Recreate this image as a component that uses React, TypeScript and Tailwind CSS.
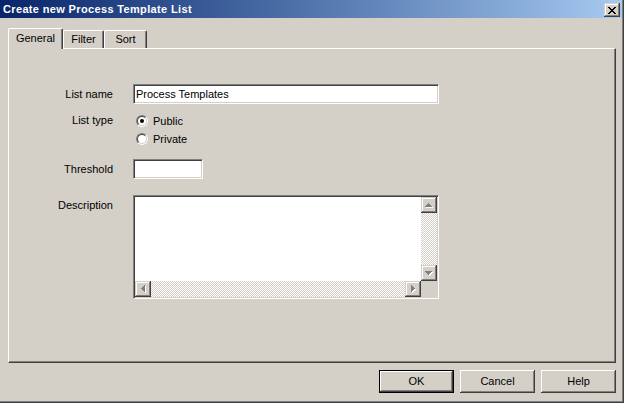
import React from "react";

const FONT = { fontFamily: '"Liberation Sans", Arial, sans-serif' };

function Arrow({ dir }: { dir: "up" | "down" | "left" | "right" }) {
  // rows of a small triangle, drawn as pixel rects
  const rects: { x: number; y: number; w: number; h: number }[] = [];
  if (dir === "up") {
    for (let i = 0; i < 4; i++) rects.push({ x: 7 - i, y: 6 + i, w: 1 + 2 * i, h: 1 });
  } else if (dir === "down") {
    for (let i = 0; i < 4; i++) rects.push({ x: 4 + i, y: 6 + i, w: 7 - 2 * i, h: 1 });
  } else if (dir === "left") {
    for (let i = 0; i < 4; i++) rects.push({ x: 6 + i, y: 7 - i, w: 1, h: 1 + 2 * i });
  } else {
    for (let i = 0; i < 4; i++) rects.push({ x: 6 + i, y: 4 + i, w: 1, h: 7 - 2 * i });
  }
  return (
    <svg width="16" height="16" viewBox="0 0 16 16" shapeRendering="crispEdges" className="block">
      {rects.map((r, i) => (
        <rect key={"w" + i} x={r.x + 1} y={r.y + 1} width={r.w} height={r.h} fill="#ffffff" />
      ))}
      {rects.map((r, i) => (
        <rect key={"g" + i} x={r.x} y={r.y} width={r.w} height={r.h} fill="#808080" />
      ))}
    </svg>
  );
}

function ScrollBtn({ dir }: { dir: "up" | "down" | "left" | "right" }) {
  return (
    <div className="w-[16px] h-[16px] shrink-0 bg-[#d4d0c8] shadow-[inset_-1px_-1px_#404040,inset_1px_1px_#d4d0c8,inset_-2px_-2px_#808080,inset_2px_2px_#ffffff]">
      <Arrow dir={dir} />
    </div>
  );
}

function Radio({ checked }: { checked?: boolean }) {
  return (
    <div className="w-[12px] h-[12px] rounded-full border border-t-[#808080] border-l-[#808080] border-r-white border-b-white shrink-0">
      <div className="w-full h-full rounded-full border border-t-[#404040] border-l-[#404040] border-r-[#d4d0c8] border-b-[#d4d0c8] bg-white flex items-center justify-center">
        {checked && <div className="w-[4px] h-[4px] rounded-full bg-black" />}
      </div>
    </div>
  );
}

function PushButton({ label, def }: { label: string; def?: boolean }) {
  const inner = (
    <div className="w-full h-full flex items-center justify-center bg-[#d4d0c8] shadow-[inset_-1px_-1px_#404040,inset_1px_1px_#ffffff,inset_-2px_-2px_#808080,inset_2px_2px_#d4d0c8] text-[11px] text-black">
      {label}
    </div>
  );
  if (def) {
    return <div className="w-[75px] h-[23px] border border-black">{inner}</div>;
  }
  return <div className="w-[75px] h-[23px]">{inner}</div>;
}

const sunken =
  "bg-white border border-t-[#808080] border-l-[#808080] border-r-white border-b-white shadow-[inset_1px_1px_#404040,inset_-1px_-1px_#d4d0c8]";

export default function App() {
  return (
    <div style={FONT} className="w-[624px] h-[403px] bg-[#d4d0c8] border-r border-b border-[#404040] text-black">
      <div className="w-full h-full flex flex-col border-r border-b border-[#808080]">
        {/* Title bar */}
        <div className="h-[18px] shrink-0 flex items-center justify-between pl-[3px] pr-[2px] bg-gradient-to-r from-[#0a246a] to-[#a6caf0]">
          <span className="text-white font-bold text-[11px] tracking-[0.35px] leading-none">
            Create new Process Template List
          </span>
          <div className="self-end mb-px w-[16px] h-[14px] bg-[#d4d0c8] shadow-[inset_-1px_-1px_#404040,inset_1px_1px_#d4d0c8,inset_-2px_-2px_#808080,inset_2px_2px_#ffffff] flex items-center justify-center">
            <svg width="8" height="7" viewBox="0 0 8 7" shapeRendering="crispEdges" className="block">
              {[0, 1, 2, 3, 4, 5, 6].map((y) => (
                <g key={y}>
                  <rect x={y} y={y} width={2} height={1} fill="#000" />
                  <rect x={6 - y} y={y} width={2} height={1} fill="#000" />
                </g>
              ))}
            </svg>
          </div>
        </div>

        {/* Body */}
        <div className="flex-1 flex flex-col pl-[8px] pr-[6px] pt-[10px]">
          {/* Tabs */}
          <div className="h-[20px] flex items-end">
            <div className="relative z-10 h-[21px] -mb-px w-[55px] bg-[#d4d0c8] border-l border-t border-white border-r border-r-[#404040] rounded-t-[2px] shadow-[inset_-1px_0_#808080] flex items-center justify-center pb-[2px] text-[11px]">
              General
            </div>
            <div className="h-[18px] w-[41px] bg-[#d4d0c8] border-l border-t border-white border-r border-r-[#404040] rounded-t-[2px] shadow-[inset_-1px_0_#808080] flex items-center justify-center text-[11px]">
              Filter
            </div>
            <div className="h-[18px] w-[43px] bg-[#d4d0c8] border-l border-t border-white border-r border-r-[#404040] rounded-t-[2px] shadow-[inset_-1px_0_#808080] flex items-center justify-center text-[11px]">
              Sort
            </div>
          </div>

          {/* Panel */}
          <div className="w-[608px] h-[315px] border-l border-t border-white border-r border-b border-r-[#404040] border-b-[#404040] shadow-[inset_-1px_-1px_#808080] pt-[35px] flex flex-col text-[11px]">
            {/* List name */}
            <div className="flex items-center h-[20px]">
              <div className="w-[104px] text-right">List name</div>
              <div className={"ml-[20px] w-[306px] h-[20px] flex items-center pl-[2px] " + sunken}>
                Process Templates
              </div>
            </div>

            {/* List type */}
            <div className="flex mt-[8px]">
              <div className="w-[104px] text-right h-[18px] leading-[17px]">List type</div>
              <div className="ml-[23px] flex flex-col">
                <div className="h-[18px] flex items-center gap-[5px]">
                  <Radio checked />
                  <span className="leading-none">Public</span>
                </div>
                <div className="h-[18px] flex items-center gap-[5px]">
                  <Radio />
                  <span className="leading-none">Private</span>
                </div>
              </div>
            </div>

            {/* Threshold */}
            <div className="flex items-center h-[20px] mt-[11px]">
              <div className="w-[104px] text-right">Threshold</div>
              <div className={"ml-[20px] w-[70px] h-[20px] " + sunken} />
            </div>

            {/* Description */}
            <div className="flex mt-[16px]">
              <div className="w-[104px] text-right leading-[20px]">Description</div>
              <div className={"ml-[20px] w-[306px] h-[104px] flex flex-col " + sunken + " p-px"}>
                <div className="flex-1 flex">
                  <div className="flex-1 bg-white" />
                  <div className="w-[16px] flex flex-col [background-image:repeating-conic-gradient(#d4d0c8_0_25%,#ffffff_0_50%)] [background-size:2px_2px]">
                    <ScrollBtn dir="up" />
                    <div className="flex-1" />
                    <ScrollBtn dir="down" />
                  </div>
                </div>
                <div className="h-[16px] flex">
                  <div className="flex-1 flex [background-image:repeating-conic-gradient(#d4d0c8_0_25%,#ffffff_0_50%)] [background-size:2px_2px]">
                    <ScrollBtn dir="left" />
                    <div className="flex-1" />
                    <ScrollBtn dir="right" />
                  </div>
                  <div className="w-[16px] bg-[#d4d0c8]" />
                </div>
              </div>
            </div>
          </div>

          {/* Buttons */}
          <div className="mt-[7px] flex justify-end gap-[6px]">
            <PushButton label="OK" def />
            <PushButton label="Cancel" />
            <PushButton label="Help" />
          </div>
        </div>
      </div>
    </div>
  );
}
